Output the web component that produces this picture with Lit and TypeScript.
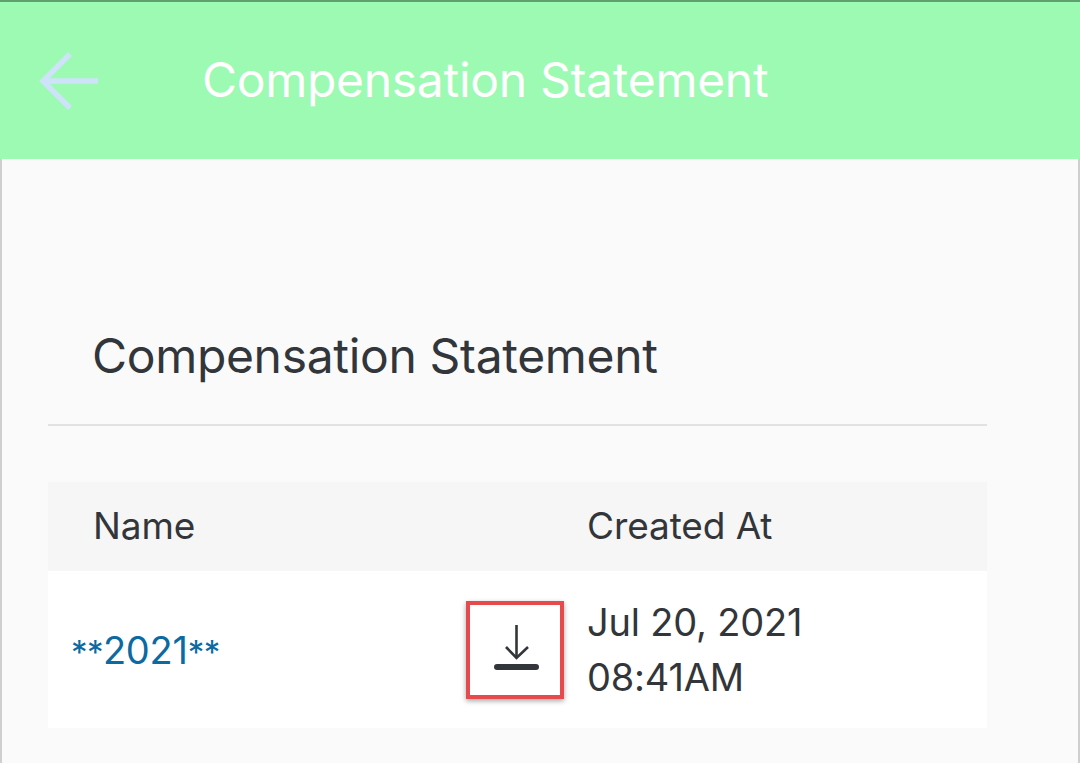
import { LitElement, html, css } from "lit";
import { customElement } from "lit/decorators.js";

@customElement("app-root")
export class AppRoot extends LitElement {
  static styles = css`
    :host { display: block; width: 1080px; height: 763px; overflow: hidden; font-family: "Inter", "Liberation Sans", sans-serif; color: #32363a; }
    .header { box-sizing: border-box; height: 159px; background: #9cfab3; border-top: 2px solid #5f9f70; display: flex; align-items: center; padding: 0 0 0 39px; }
    .back { width: 60px; height: 60px; display: block; flex: none; }
    .header-title { margin-left: 103px; margin-bottom: 2px; font-size: 48px; letter-spacing: -0.3px; font-weight: 400; color: #fff; white-space: nowrap; }
    .page { box-sizing: border-box; height: 604px; background: #fafafa; border-left: 2px solid #cfcfcf; border-right: 2px solid #cfcfcf; padding: 0 91px 0 46px; }
    .title { box-sizing: border-box; height: 267px; border-bottom: 2px solid #e2e2e2; padding: 164px 0 0 44px; font-size: 48px; letter-spacing: -0.33px; line-height: 66px; white-space: nowrap; }
    .table { margin-top: 56px; }
    .row { display: grid; grid-template-columns: 539px 1fr; }
    .head { height: 89px; padding-bottom: 2px; box-sizing: border-box; background: #f6f6f6; align-items: center; font-size: 37px; letter-spacing: -0.1px; }
    .head .name { padding-left: 45px; }
    .body { height: 157px; background: #fff; align-items: center; font-size: 38px; letter-spacing: -0.2px; }
    .cell-name { display: flex; align-items: center; justify-content: space-between; padding-left: 23px; padding-right: 23px; }
    .link { color: #0b6aa2; }
    .ast { font-size: 33px; letter-spacing: -0.6px; }
    .dl { box-sizing: border-box; width: 98px; height: 98px; border: 4px solid #e64a4c; box-shadow: 0 2px 5px rgba(0,0,0,.35); display: flex; align-items: center; justify-content: center; background: #fff; }
    .dl svg { width: 50px; height: 50px; display: block; }
    .date { line-height: 55px; }
  `;

  render() {
    return html`
      <div class="header">
        <svg class="back" viewBox="0 0 60 60" fill="none" stroke="#cee3f9" stroke-width="5.5">
          <path d="M3 30H59" />
          <path d="M31 3L4 30L31 57" />
        </svg>
        <div class="header-title">Compensation Statement</div>
      </div>
      <div class="page">
        <div class="title">Compensation Statement</div>
        <div class="table">
          <div class="row head">
            <div class="name">Name</div>
            <div>Created At</div>
          </div>
          <div class="row body">
            <div class="cell-name">
              <span class="link"><span class="ast">**</span>2021<span class="ast">**</span></span>
              <div class="dl">
                <svg viewBox="0 0 50 50" fill="none" stroke="#32363a">
                  <path d="M26.5 0V33" stroke-width="2.6" />
                  <path d="M16 22L26.5 33L38 22" stroke-width="2.6" />
                  <path d="M7 42H46" stroke-width="6" stroke-linecap="round" />
                </svg>
              </div>
            </div>
            <div class="date">Jul 20, 2021<br />08:41AM</div>
          </div>
        </div>
      </div>
    `;
  }
}
